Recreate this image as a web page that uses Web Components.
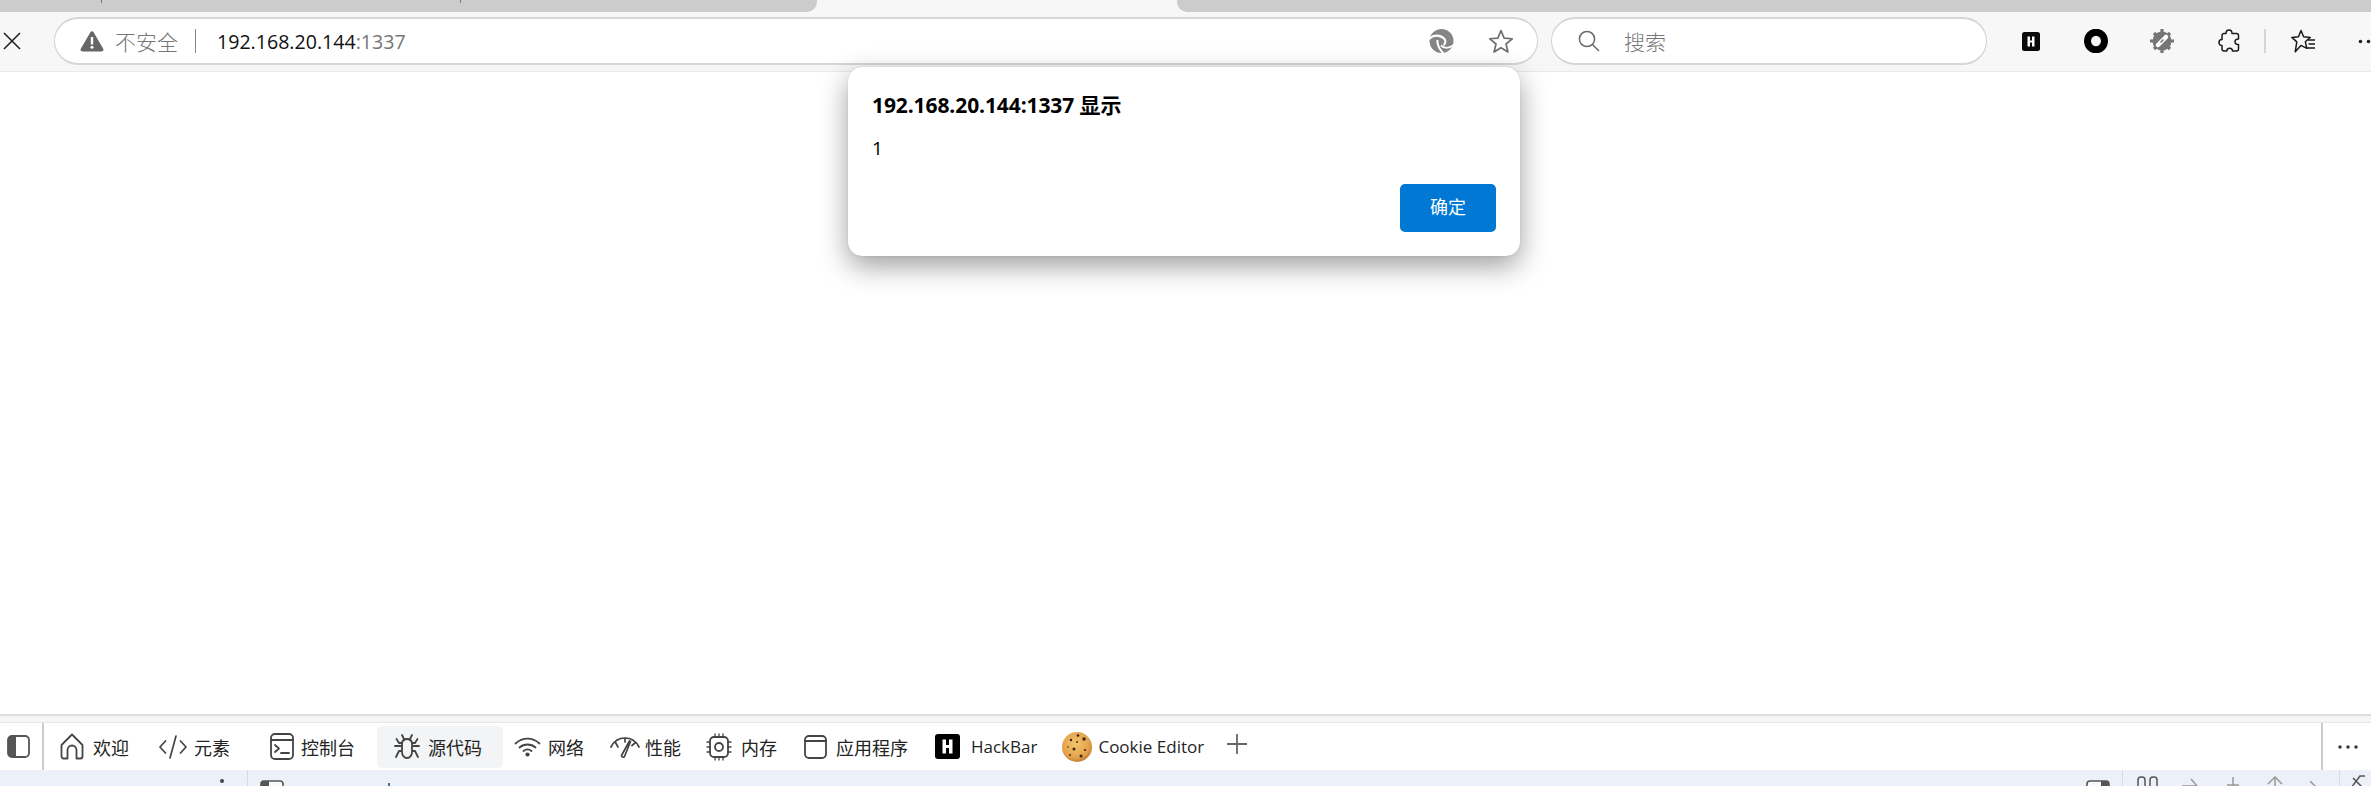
<!doctype html>
<html><head><meta charset="utf-8"><title>192.168.20.144:1337</title>
<style>
html,body{margin:0;padding:0;width:2371px;height:786px;overflow:hidden;background:#fff;font-family:"Open Sans","Noto Sans CJK SC",sans-serif;}
</style></head><body>
<browser-window>
  <tab-strip slot="tabs"></tab-strip>
  <nav-toolbar slot="nav"></nav-toolbar>
  <page-view slot="page"><alert-dialog origin="192.168.20.144:1337 显示" message="1" action="确定"></alert-dialog></page-view>
  <devtools-dock slot="dock"></devtools-dock>
</browser-window>
<script>
const S='fill="none" stroke="#444" stroke-linecap="round" stroke-linejoin="round"';
function def(name,css,html){
  customElements.define(name,class extends HTMLElement{
    constructor(){super();const r=this.attachShadow({mode:'open'});
      const body=typeof html==='function'?html(this):html;
      r.innerHTML='<style>'+css+'</style>'+body;}
  });
}
def('browser-window',':host{display:flex;flex-direction:column;width:2371px;height:786px;overflow:hidden}',
 '<slot name="tabs"></slot><slot name="nav"></slot><slot name="page"></slot><slot name="dock"></slot>');

def('tab-strip',`:host{display:flex;justify-content:space-between;height:12px;background:#f7f7f7;flex:none}
 .t{background:#ccc;height:12px;position:relative}
 .a{width:817px;border-bottom-right-radius:10px}.b{width:1194px;border-bottom-left-radius:10px}
 i{position:absolute;top:0;width:1px;height:3px;background:#777}`,
 '<div class="t a"><i style="left:101px"></i><i style="left:460px"></i></div><div class="t b"></div>');

def('pill-box',`:host{display:flex;align-items:center;flex:none;box-sizing:border-box;height:48px;background:#fff;border:1px solid #d2d2d2;border-top:2px solid #d6d6d6;border-bottom:2px solid #d6d6d6;border-radius:24px}`,'<slot></slot>');

def('nav-toolbar',`:host{display:flex;align-items:center;box-sizing:border-box;height:60px;background:#f7f7f7;border-bottom:1px solid #eaeaea;flex:none;font-size:19.6px;padding-bottom:1px;overflow:hidden}
 svg{display:block;flex:none}
 .close{margin-left:3px;margin-right:33px}
 pill-box.addr{width:1484px;margin-right:13px}
 pill-box.search{width:436px;margin-right:35px}
 .warn{margin-left:25px}
 .ins{color:#767676;margin-left:11px;font-family:"Noto Sans CJK SC",sans-serif;font-size:21px;font-weight:300;line-height:28px}
 .sep{width:1px;height:24px;background:#8a8a8a;margin:0 21px 0 17px}
 .url{color:#111;white-space:nowrap;flex:1}.url span{color:#767676}
 .swirl{margin-right:34px}.star{margin-right:23px}
 .mag{margin-left:26px;margin-right:24px}
 .q{color:#767676;font-family:"Noto Sans CJK SC",sans-serif;font-size:21px;font-weight:300}
 .sepv{width:2px;height:24px;background:#d5d5d5;flex:none}
 `,`
 <svg class="close" width="18" height="18" viewBox="0 0 18 18"><path d="M1 1 17 17M17 1 1 17" stroke="#222" stroke-width="1.6" fill="none"/></svg>
 <pill-box class="addr">
  <svg class="warn" width="24" height="22" viewBox="0 0 24 22"><path d="M12 1.2c.7 0 1.2.4 1.6 1l9.6 16.6c.7 1.2 0 2.6-1.5 2.6H2.300c-1.500 0-2.200-1.400-1.500-2.600L10.400 2.200c.4-.6.900-1 1.600-1z" fill="#666"/><rect x="10.800" y="7" width="2.400" height="7.500" fill="#fff"/><circle cx="12" cy="17.300" r="1.500" fill="#fff"/></svg>
  <span class="ins">不安全</span><span class="sep"></span>
  <span class="url">192.168.20.144<span>:1337</span></span>
  <svg class="swirl" width="25" height="24" viewBox="0 0 25 24"><circle cx="12.500" cy="12" r="12" fill="#858585"/><path d="M0 10C4 5.500 11 5.500 15 9.500c2 2 1.800 5-.5 6.500" fill="none" stroke="#fff" stroke-width="2.200"/><path d="M8.500 11C8 15.500 11 21 15 25" fill="none" stroke="#fff" stroke-width="2"/><path d="M12 16.500c3 3 8 3 13-.5" fill="none" stroke="#fff" stroke-width="1.800"/></svg>
  <svg class="star" width="26" height="25" viewBox="0 0 24 24"><path d="M12 1.500l3 7.300 7.800.6-6 5 1.900 7.700L12 18l-6.700 4.100 1.900-7.700-6-5 7.800-.6z" fill="none" stroke="#6e6e6e" stroke-width="1.600" stroke-linejoin="round"/></svg>
 </pill-box>
 <pill-box class="search">
  <svg class="mag" width="22" height="22" viewBox="0 0 22 22"><circle cx="9" cy="9" r="7.600" fill="none" stroke="#6a6a6a" stroke-width="1.500"/><path d="M14.500 14.500 21 21" stroke="#6a6a6a" stroke-width="1.500"/></svg>
  <span class="q">搜索</span>
 </pill-box>
 <svg style="margin-right:44px" width="18" height="19" viewBox="0 0 18 19"><rect width="18" height="19" rx="2.500" fill="#0a0a0a"/><path d="M5.500 4.500h2.500v4h2v-4h2.500v10H10v-4H8v4H5.500z" fill="#fff"/></svg>
 <svg style="margin-right:42px" width="24" height="24" viewBox="0 0 24 24"><ellipse cx="12" cy="12" rx="8.500" ry="8.800" fill="none" stroke="#000" stroke-width="7"/></svg>
 <svg style="margin-right:44px" width="24" height="24" viewBox="0 0 24 24"><g stroke="#767676" stroke-width="3.200"><path d="M12 0v24M0 12h24M4 4l16 16M20 4 4 20"/></g><circle cx="12" cy="12" r="9.500" fill="#767676"/><path d="M8 16 16 8" stroke="#fff" stroke-width="4.500" stroke-linecap="round"/><path d="M10.500 13.500 13.500 10.500" stroke="#767676" stroke-width="1.600"/></svg>
 <svg style="margin-right:24px" width="22" height="24" viewBox="0 0 22 24"><path d="M8 4.500c0-2 1.200-3.500 3-3.500s3 1.500 3 3.500h4.500a2 2 0 0 1 2 2V10c-2 0-3.500 1-3.500 2.800s1.500 2.800 3.500 2.800V20a2 2 0 0 1-2 2h-4c0-1.800-1.200-2.800-2.800-2.800S8.800 20.200 8.800 22H6a2 2 0 0 1-2-2v-3.500c-1.800 0-3-1.200-3-3s1.200-3 3-3V6.500a2 2 0 0 1 2-2z" fill="none" stroke="#1a1a1a" stroke-width="1.500" stroke-linejoin="round"/></svg>
 <span class="sepv" style="margin-right:25px"></span>
 <svg style="margin-right:42px" width="25" height="25" viewBox="0 0 25 25"><path d="M10 1.500l2.600 6.300 6.700.6-5 4.300 1.500 6.600L10 16.400l-5.800 6.400 1.600-9.900L.8 8.400l6.700-.6z" fill="none" stroke="#1a1a1a" stroke-width="1.500" stroke-linejoin="round"/><path d="M17 11h7M17.500 15h6.500M16 19h8" stroke="#1a1a1a" stroke-width="1.500"/></svg>
 <svg width="14" height="5" viewBox="0 0 14 5"><circle cx="2.500" cy="2.500" r="1.800" fill="#222"/><circle cx="10.500" cy="2.500" r="1.800" fill="#222"/></svg>
`);

def('page-view',`:host{display:block;position:relative;flex:1;background:#fff;min-height:0}`,'<slot></slot>');

def('alert-dialog',`:host{position:absolute;left:848px;top:-5px;width:672px;height:189px;box-sizing:border-box;background:#fff;border-radius:14px;box-shadow:0 0 1px rgba(0,0,0,.3),0 10px 28px rgba(0,0,0,.38);padding:24px 24px 24px 24px;display:flex;flex-direction:column;font-family:"Open Sans","Noto Sans CJK SC",sans-serif;color:#000}
 h1{margin:0;font-size:21px;line-height:28px;font-weight:700;font-family:"Open Sans","Noto Sans CJK SC",sans-serif;letter-spacing:-.1px}
 p{margin:15px 0 0;font-size:19px;line-height:28px}
 .row{margin-top:auto;display:flex;justify-content:flex-end}
 button{width:96px;height:48px;border:0;border-radius:5px;background:#0078d4;color:#fff;font:400 18px "Noto Sans CJK SC",sans-serif;padding:0 0 4px}`,
 h=>`<h1>${h.getAttribute('origin')}</h1><p>${h.getAttribute('message')}</p><div class="row"><button>${h.getAttribute('action')}</button></div>`);

def('dev-tab',`:host{display:flex;align-items:center;height:42px;flex:none;font:400 18px "Open Sans","Noto Sans CJK SC",sans-serif;color:#242424;white-space:nowrap;box-sizing:border-box;border-radius:5px}
 :host([active]){background:#f3f4f6}
 ::slotted(svg){display:block;flex:none}`,'<slot name="icon"></slot><slot></slot>');

def('devtools-dock',`:host{display:flex;flex-direction:column;flex:none;height:72px;background:#f5f5f5;border-top:2px solid #dedede;box-sizing:border-box;overflow:hidden}
 .strip{height:6px;border-bottom:1px solid #e6e6e6;flex:none}
 .tabs{display:flex;align-items:center;height:47px;background:#fff;flex:none}
 .tog{margin-left:7px;margin-right:12px;flex:none}
 .div{width:2px;height:47px;background:#c9ccd2;flex:none}
 .more{margin-left:15px;flex:none}
 .sub{flex:1;background:#ebf0f9;display:flex;align-items:flex-start;position:relative;overflow:hidden}
 .sub svg{display:block;flex:none}
 .d{width:1px;height:16px;background:#d3dcee;flex:none}
 `,`
 <div class="strip"></div>
 <div class="tabs">
  <svg class="tog" width="23" height="23" viewBox="0 0 23 23"><rect x="1" y="1" width="21" height="21" rx="4" fill="#fff" stroke="#555" stroke-width="1.800"/><path d="M1 5a4 4 0 0 1 4-4h4v21H5a4 4 0 0 1-4-4z" fill="#555"/></svg>
  <span class="div"></span>
  <dev-tab style="margin-left:16px"><svg slot="icon" style="margin-right:9px" width="24" height="27" viewBox="0 0 24 27"><path d="M1.500 12 12 1.500 22.500 12v11.500a2 2 0 0 1-2 2H16.500V17a4.500 4.500 0 0 0-9 0v8.500H3.500a2 2 0 0 1-2-2z" ${S} stroke-width="1.800"/></svg>欢迎</dev-tab>
  <dev-tab style="margin-left:30px"><svg slot="icon" style="margin-right:7px" width="28" height="24" viewBox="0 0 28 24"><path d="M6.500 6 1 12l5.500 6M21.500 6 27 12l-5.500 6M17 1 11 23" ${S} stroke-width="1.700"/></svg>元素</dev-tab>
  <dev-tab style="margin-left:40px"><svg slot="icon" style="margin-right:7px" width="24" height="27" viewBox="0 0 24 27"><rect x="1" y="1" width="22" height="25" rx="4" ${S} stroke-width="1.800"/><path d="M1 7h22M5 12l4 3.500-4 3.500M11 20h8" ${S} stroke-width="1.800"/></svg>控制台</dev-tab>
  <dev-tab active style="margin-left:22px;padding:0 22px 0 17px;width:126px"><svg slot="icon" style="margin-right:8px" width="26" height="27" viewBox="0 0 26 27"><path d="M8 11c0-3 2-5 5-5s5 2 5 5v8c0 3-2 6-5 6s-5-3-5-6zM9 4 10.500 7M17 4 15.500 7M8 13H1M18 13h7M8 10H5L2.500 6M18 10h3l2.500-4M8 18H5L2 24M18 18h3l3 6M8 2l1 2M18 2l-1 2" ${S} stroke-width="1.800"/></svg>源代码</dev-tab>
  <dev-tab style="margin-left:11px"><svg slot="icon" style="margin-right:7px" width="27" height="21" viewBox="0 0 27 21"><path d="M1.500 7.500c7-6.500 17-6.500 24 0M5.500 11.500c4.500-4 11.500-4 16 0M9.500 15c2.500-2 5.500-2 8 0" ${S} stroke-width="1.800"/><circle cx="13.500" cy="18.500" r="2.100" fill="#444"/></svg>网络</dev-tab>
  <dev-tab style="margin-left:26px"><svg slot="icon" style="margin-right:5px" width="30" height="24" viewBox="0 0 30 24"><path d="M1 12C4 6 9 3 15 3c6 0 11 3 14 9M5.500 7.500 8 12M15 3v4M25 8l-3 2.500" ${S} stroke-width="1.700"/><path d="M11.500 20.500 19.500 6l1 .5-6 15c-.7 1.500-3.500 0-3-1z" ${S} stroke-width="1.700"/></svg>性能</dev-tab>
  <dev-tab style="margin-left:25px"><svg slot="icon" style="margin-right:9px" width="26" height="28" viewBox="0 0 26 28"><rect x="4" y="4" width="18" height="20" rx="4" ${S} stroke-width="1.800"/><circle cx="13" cy="14" r="4" ${S} stroke-width="1.800"/><path d="M9 1v3M13 1v3M17 1v3M9 24v3M13 24v3M17 24v3M1 9h3M1 14h3M1 19h3M22 9h3M22 14h3M22 19h3" ${S} stroke-width="1.300"/></svg>内存</dev-tab>
  <dev-tab style="margin-left:27px"><svg slot="icon" style="margin-right:9px" width="23" height="24" viewBox="0 0 23 24"><rect x="1" y="1" width="21" height="22" rx="4" ${S} stroke-width="1.800"/><path d="M1 6h21" ${S} stroke-width="1.800"/></svg>应用程序</dev-tab>
  <dev-tab style="margin-left:27px;font-size:17px"><svg slot="icon" style="margin-right:11px" width="25" height="25" viewBox="0 0 25 25"><rect width="25" height="25" rx="3" fill="#000"/><path d="M7.500 5.500H11V11h3V5.500h3.500v14H14V14h-3v5.500H7.500z" fill="#fff"/></svg>HackBar</dev-tab>
  <dev-tab style="margin-left:24px;font-size:17px"><svg slot="icon" style="margin-right:5px" width="32" height="32" viewBox="0 0 32 32"><defs><radialGradient id="ck" cx=".45" cy=".4" r=".65"><stop offset="0" stop-color="#f3c56e"/><stop offset=".7" stop-color="#e3a24a"/><stop offset="1" stop-color="#b9742a"/></radialGradient></defs><circle cx="16" cy="16" r="15" fill="url(#ck)"/><g fill="#3a2414"><circle cx="17" cy="4.500" r="1.300"/><circle cx="23" cy="8" r="1.700"/><circle cx="10" cy="9" r="1.200"/><circle cx="16" cy="11" r=".9"/><circle cx="13" cy="18" r="1.500"/><circle cx="24" cy="19" r="1.100"/><circle cx="20" cy="25" r="1.500"/><circle cx="7" cy="16" r=".8"/><circle cx="9" cy="24" r=".9"/></g></svg>Cookie Editor</dev-tab>
  <svg style="margin-left:23px;margin-top:-6px;flex:none" width="20" height="20" viewBox="0 0 20 20"><path d="M10 0v20M0 10h20" stroke="#666" stroke-width="1.800"/></svg>
  <span style="flex:1"></span>
  <span class="div"></span>
  <svg class="more" style="margin-right:13px" width="20" height="4" viewBox="0 0 20 4"><circle cx="2" cy="2" r="1.700" fill="#333"/><circle cx="10" cy="2" r="1.700" fill="#333"/><circle cx="18" cy="2" r="1.700" fill="#333"/></svg>
 </div>
 <div class="sub">
  <svg style="margin:9px 0 0 220px" width="4" height="4"><circle cx="2" cy="2" r="2" fill="#444"/></svg>
  <span class="d" style="margin-left:23px"></span>
  <svg style="margin:10px 0 0 12px" width="24" height="8" viewBox="0 0 24 8"><rect x="1" y="1" width="22" height="12" rx="3" fill="#f8f9fc" stroke="#555" stroke-width="1.600"/><path d="M1 4a3 3 0 0 1 3-3h5v8H1z" fill="#555"/></svg>
  <svg style="margin:13px 0 0 104px" width="2" height="3"><rect width="2" height="3" fill="#3a6ea5"/></svg>
  <span style="flex:1"></span>
  <svg style="margin:10px 0 0 0" width="24" height="8" viewBox="0 0 24 8"><rect x="1" y="1" width="22" height="12" rx="3" fill="#f8f9fc" stroke="#555" stroke-width="1.600"/><path d="M23 4a3 3 0 0 0-3-3h-5v8h8z" fill="#555"/></svg>
  <span class="d" style="margin-left:12px"></span>
  <svg style="margin:6px 0 0 14px" width="22" height="12" viewBox="0 0 22 12"><rect x="1" y="1" width="7" height="14" rx="3" fill="none" stroke="#555" stroke-width="1.500"/><rect x="13" y="1" width="7" height="14" rx="3" fill="none" stroke="#555" stroke-width="1.500"/></svg>
  <svg style="margin:8px 0 0 22px" width="18" height="10" viewBox="0 0 18 10"><path d="M1 8h14M10 1l6 7" fill="none" stroke="#999" stroke-width="1.500"/></svg>
  <svg style="margin:7px 0 0 26px" width="16" height="11" viewBox="0 0 16 11"><path d="M8 0v11M2 8h12" fill="none" stroke="#999" stroke-width="1.500"/></svg>
  <svg style="margin:6px 0 0 26px" width="16" height="12" viewBox="0 0 16 12"><path d="M8 2v10M1 8l7-7 7 7" fill="none" stroke="#999" stroke-width="1.500"/></svg>
  <svg style="margin:11px 0 0 26px" width="8" height="7" viewBox="0 0 8 7"><path d="M1 0l6 6" fill="none" stroke="#999" stroke-width="1.500"/></svg>
  <span class="d" style="margin-left:22px"></span>
  <svg style="margin:5px 5px 0 10px" width="16" height="13" viewBox="0 0 16 13"><path d="M1 13 10 1h5M3 3l10 10" fill="none" stroke="#555" stroke-width="1.500"/></svg>
 </div>
`);
</script>
</body></html>
